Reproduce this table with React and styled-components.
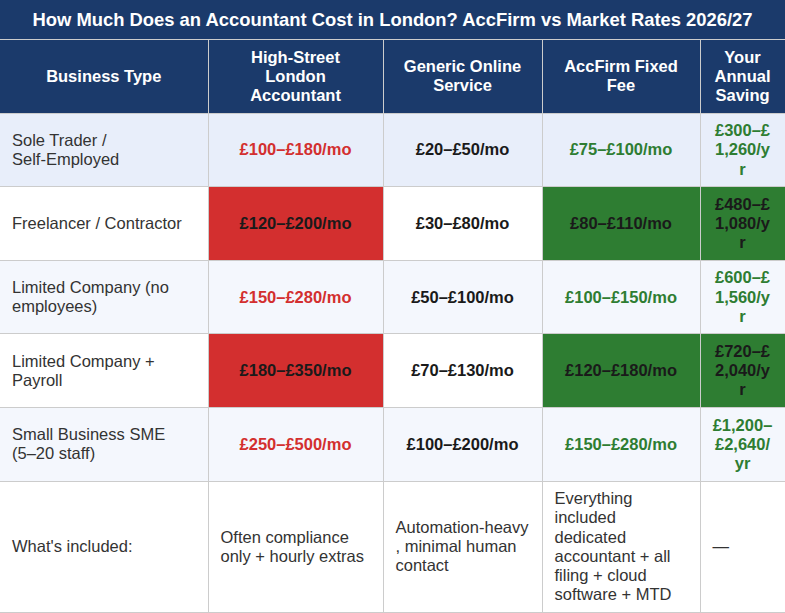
import styled, { createGlobalStyle } from "styled-components";

const NAVY = "#1b3a6b";
const LINE = "#cccccc";
const WJ = "\u2060";

const GlobalStyle = createGlobalStyle`
  body {
    margin: 0;
    background: #ffffff;
    font-family: "Liberation Sans", Arial, sans-serif;
  }
`

const Table = styled.table`
  width: 785px;
  border-collapse: collapse;
  table-layout: fixed;
  font-size: 16.5px;
  line-height: 19.2px;
  color: #333333;
`

const TitleCell = styled.th`
  background: ${NAVY};
  color: #ffffff;
  font-size: 18.4px;
  line-height: 21px;
  font-weight: bold;
  text-align: center;
  padding: 9px 12px;
  border-bottom: 1px solid ${LINE};
`

const HeadCell = styled.th`
  background: ${NAVY};
  color: #ffffff;
  font-weight: bold;
  text-align: center;
  vertical-align: middle;
  padding: 7.5px 12px;
  border: 1px solid ${LINE};

  &:first-child { border-left: none; }
`

const Row = styled.tr`
  background: ${({ $bg }) => $bg || "#ffffff"};
`

const tones = {
  red: "color: #d32f2f; font-weight: bold; text-align: center;",
  green: "color: #2e7d32; font-weight: bold; text-align: center;",
  plain: "color: #1a1a1a; font-weight: bold; text-align: center;",
  redFill: "background: #d32f2f; color: #1a1a1a; font-weight: bold; text-align: center;",
  greenFill: "background: #2e7d32; color: #1a1a1a; font-weight: bold; text-align: center;",
  label: "color: #333333; text-align: left;",
}

const Cell = styled.td`
  padding: 7.5px 12px;
  vertical-align: middle;
  border: 1px solid ${LINE};
  overflow-wrap: anywhere;
  ${({ $tone }) => tones[$tone || "label"]}
  ${({ $tight }) => $tight && "line-break: anywhere;"}

  &:first-child { border-left: none; }
`

const rows = [
  { bg: "#e8eefa", type: `Sole Trader / Self-${WJ}Employed`, high: ["£100–£180/mo", "red"], online: "£20–£50/mo", fee: ["£75–£100/mo", "green"], saving: ["£300–£1,260/yr", "green"] },
  { bg: "#ffffff", type: "Freelancer / Contractor", high: ["£120–£200/mo", "redFill"], online: "£30–£80/mo", fee: ["£80–£110/mo", "greenFill"], saving: ["£480–£1,080/yr", "greenFill"] },
  { bg: "#f4f7fd", type: "Limited Company (no employees)", high: ["£150–£280/mo", "red"], online: "£50–£100/mo", fee: ["£100–£150/mo", "green"], saving: ["£600–£1,560/yr", "green"] },
  { bg: "#ffffff", type: "Limited Company + Payroll", high: ["£180–£350/mo", "redFill"], online: "£70–£130/mo", fee: ["£120–£180/mo", "greenFill"], saving: ["£720–£2,040/yr", "greenFill"] },
  { bg: "#f4f7fd", type: `Small Business SME (5–${WJ}20 staff)`, high: ["£250–£500/mo", "red"], online: "£100–£200/mo", fee: ["£150–£280/mo", "green"], saving: ["£1,200–£2,640/yr", "green"] },
]

const App = () => {
  return (
    <>
      <GlobalStyle />
      <Table>
        <colgroup>
          <col style={{ width: 208 }} />
          <col style={{ width: 175 }} />
          <col style={{ width: 159 }} />
          <col style={{ width: 158 }} />
          <col style={{ width: 85 }} />
        </colgroup>
        <thead>
          <tr>
            <TitleCell colSpan={5}>
              How Much Does an Accountant Cost in London? AccFirm vs Market Rates 2026/27
            </TitleCell>
          </tr>
          <tr>
            <HeadCell>Business Type</HeadCell>
            <HeadCell>High-Street London Accountant</HeadCell>
            <HeadCell>Generic Online Service</HeadCell>
            <HeadCell>AccFirm Fixed Fee</HeadCell>
            <HeadCell>Your Annual Saving</HeadCell>
          </tr>
        </thead>
        <tbody>
          {rows.map(r => (
            <Row key={r.type} $bg={r.bg}>
              <Cell>{r.type}</Cell>
              <Cell $tone={r.high[1]}>{r.high[0]}</Cell>
              <Cell $tone="plain">{r.online}</Cell>
              <Cell $tone={r.fee[1]}>{r.fee[0]}</Cell>
              <Cell $tone={r.saving[1]} $tight>{r.saving[0]}</Cell>
            </Row>
          ))}
          <Row>
            <Cell>What's included:</Cell>
            <Cell>Often compliance only + hourly extras</Cell>
            <Cell>Automation-{WJ}heavy, minimal human contact</Cell>
            <Cell>Everything included dedicated accountant + all filing + cloud software + MTD</Cell>
            <Cell>—</Cell>
          </Row>
        </tbody>
      </Table>
    </>
  );
}

export default App;
